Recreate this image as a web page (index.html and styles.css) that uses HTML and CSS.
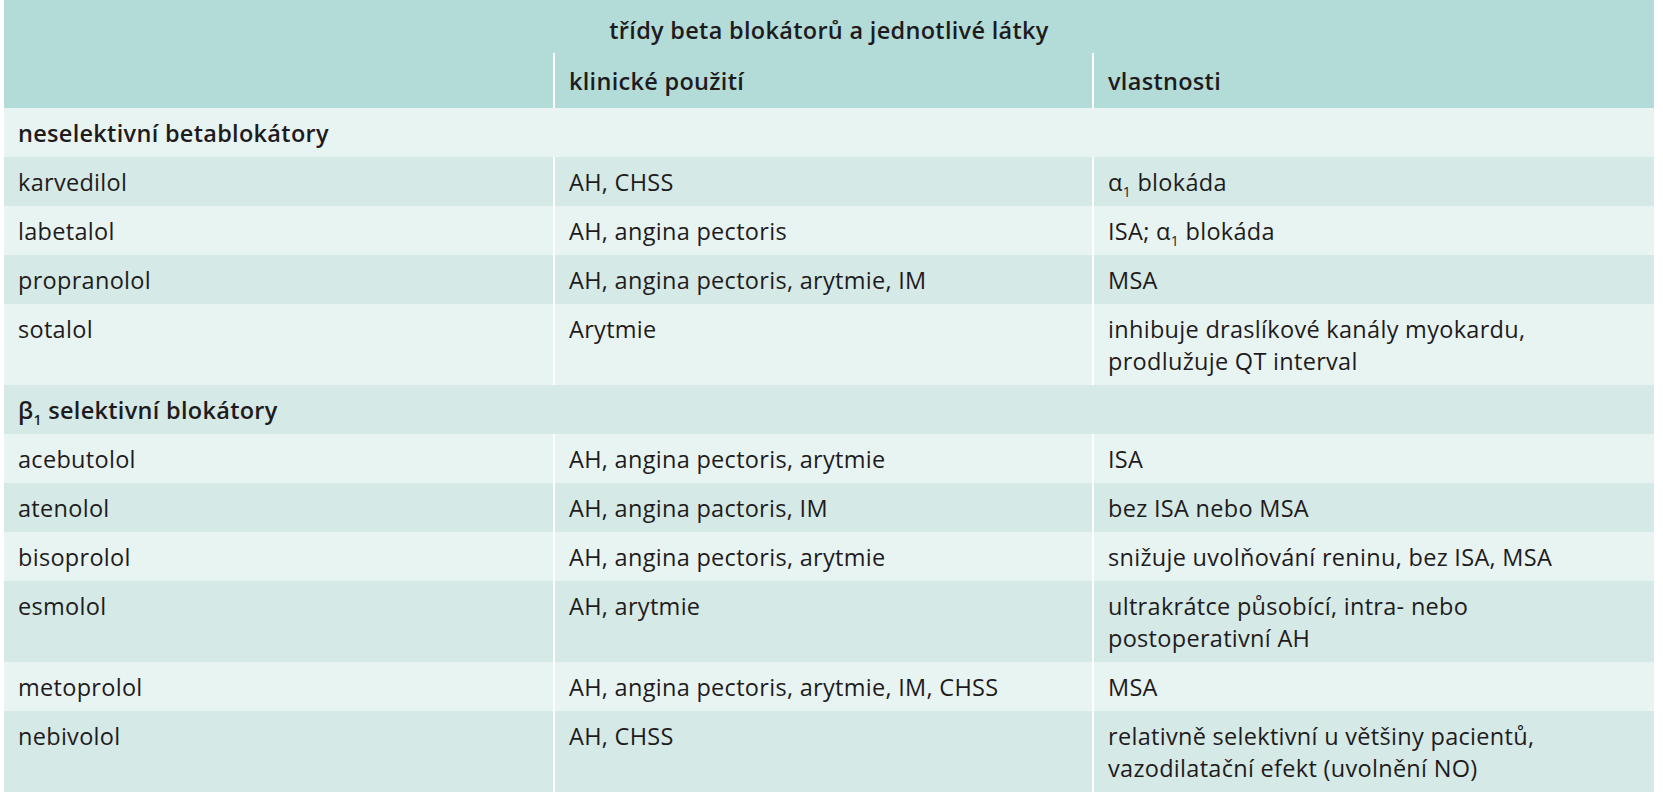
FILE: index.html
```html
<!DOCTYPE html>
<html lang="cs">
<head>
<meta charset="utf-8">
<title>třídy beta blokátorů</title>
<link rel="stylesheet" href="styles.css">
</head>
<body>
<table class="bb-table">
  <colgroup>
    <col class="c1">
    <col class="c2">
    <col class="c3">
  </colgroup>
  <thead>
    <tr class="title-row"><th colspan="3">třídy beta blokátorů a jednotlivé látky</th></tr>
    <tr class="head-row"><th></th><th class="div">klinické použití</th><th class="div">vlastnosti</th></tr>
  </thead>
  <tbody>
    <tr class="section light"><td colspan="3">neselektivní betablokátory</td></tr>
    <tr class="dark"><td>karvedilol</td><td class="div">AH, CHSS</td><td class="div">α<sub>1</sub> blokáda</td></tr>
    <tr class="light"><td>labetalol</td><td class="div">AH, angina pectoris</td><td class="div">ISA; α<sub>1</sub> blokáda</td></tr>
    <tr class="dark"><td>propranolol</td><td class="div">AH, angina pectoris, arytmie, IM</td><td class="div">MSA</td></tr>
    <tr class="light"><td>sotalol</td><td class="div">Arytmie</td><td class="div">inhibuje draslíkové kanály myokardu,<br>prodlužuje QT interval</td></tr>
    <tr class="section dark"><td colspan="3">β<sub>1</sub> selektivní blokátory</td></tr>
    <tr class="light"><td>acebutolol</td><td class="div">AH, angina pectoris, arytmie</td><td class="div">ISA</td></tr>
    <tr class="dark"><td>atenolol</td><td class="div">AH, angina pactoris, IM</td><td class="div">bez ISA nebo MSA</td></tr>
    <tr class="light"><td>bisoprolol</td><td class="div">AH, angina pectoris, arytmie</td><td class="div">snižuje uvolňování reninu, bez ISA, MSA</td></tr>
    <tr class="dark"><td>esmolol</td><td class="div">AH, arytmie</td><td class="div">ultrakrátce působící, intra- nebo<br>postoperativní AH</td></tr>
    <tr class="light"><td>metoprolol</td><td class="div">AH, angina pectoris, arytmie, IM, CHSS</td><td class="div">MSA</td></tr>
    <tr class="dark"><td>nebivolol</td><td class="div">AH, CHSS</td><td class="div">relativně selektivní u většiny pacientů,<br>vazodilatační efekt (uvolnění NO)</td></tr>
  </tbody>
</table>
</body>
</html>
```
FILE: styles.css
```css
html, body {
  margin: 0;
  padding: 0;
  background: #ffffff;
}
body {
  padding-left: 4px;
}
.bb-table {
  width: 1650px;
  table-layout: fixed;
  border-collapse: separate;
  border-spacing: 0;
  font-family: "Open Sans", "Liberation Sans", sans-serif;
  font-size: 23.5px;
  letter-spacing: 0.3px;
  color: #1f1b1c;
}
.c1 { width: 549px; }
.c2 { width: 539px; }
.c3 { width: 562px; }

.bb-table th,
.bb-table td {
  text-align: left;
  vertical-align: top;
  line-height: 32px;
  padding: 8.5px 14px 8.5px 14px;
}
.bb-table th {
  font-weight: 600;
  background: #b3dcd9;
}
.title-row th {
  text-align: center;
  padding-top: 14px;
  padding-bottom: 7px;
}
.head-row th {
  padding-top: 12px;
  padding-bottom: 11px;
}
.bb-table .div {
  border-left: 2px solid #ffffff;
}
.section td {
  font-weight: 600;
}
.light td { background: #e8f4f2; }
.dark td { background: #d5e9e6; }

sub {
  font-size: 0.6em;
  line-height: 0;
  vertical-align: -0.4em;
}
```
